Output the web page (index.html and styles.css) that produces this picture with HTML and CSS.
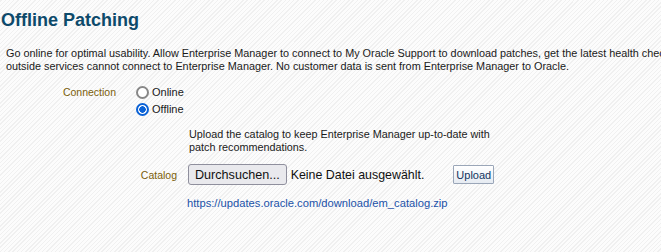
FILE: index.html
```html
<!DOCTYPE html>
<html lang="en">
<head>
    <meta charset="UTF-8">
    <title>Offline Patching</title>
    <link rel="stylesheet" href="styles.css">
</head>
<body>
    <div class="page">
        <h1 class="title">Offline Patching</h1>
        <p class="intro">Go online for optimal usability. Allow Enterprise Manager to connect to My Oracle Support to download patches, get the latest health checks, and more. In offline mode,<br>outside services cannot connect to Enterprise Manager. No customer data is sent from Enterprise Manager to Oracle.</p>

        <!-- Connection mode -->
        <div class="row connection">
            <div class="label conn-label">Connection</div>
            <div class="radios">
                <label class="radio"><span class="dot"></span>Online</label>
                <label class="radio checked"><span class="dot"></span>Offline</label>
            </div>
        </div>

        <p class="help">Upload the catalog to keep Enterprise Manager up-to-date with<br>patch recommendations.</p>

        <!-- Catalog upload -->
        <div class="row catalog">
            <div class="label cat-label">Catalog</div>
            <button class="browse" type="button">Durchsuchen...</button>
            <span class="nofile">Keine Datei ausgewählt.</span>
            <button class="upload" type="button">Upload</button>
        </div>

        <a class="link" href="#">https://updates.oracle.com/download/em_catalog.zip</a>
    </div>
</body>
</html>
```

FILE: styles.css
```css
* {
    margin: 0;
    padding: 0;
    box-sizing: border-box;
}

html, body {
    height: 100%;
}

body {
    font-family: 'Liberation Sans', Arial, sans-serif;
    font-size: 11px;
    color: #222;
    background: repeating-linear-gradient(-45deg, #fcfcfc 0, #fcfcfc 2px, #f0f0f0 2px, #f0f0f0 3px);
    overflow: hidden;
}

.page {
    padding: 9px 0 0 1px;
    width: 661px;
}

.title {
    font-size: 18px;
    font-weight: bold;
    color: #0d4a6b;
    line-height: 22px;
    margin-bottom: 16px;
}

.intro {
    margin-left: 5px;
    line-height: 13px;
    white-space: nowrap;
    width: 655px;
    overflow: hidden;
    height: 26px;
    font-size: 10.85px;
    color: #1a1a1a;
}

.row {
    display: flex;
    align-items: flex-start;
}

.label {
    color: #7b5e0a;
    text-align: right;
}

.connection {
    margin-top: 12px;
}

.conn-label {
    width: 115px;
    padding-top: 1px;
    font-size: 10.5px;
}

.radios {
    margin-left: 20px;
    display: flex;
    flex-direction: column;
    gap: 3px;
}

.radio {
    display: flex;
    align-items: center;
    gap: 3px;
    height: 14px;
    color: #1a1a1a;
}

.dot {
    width: 13px;
    height: 13px;
    border-radius: 50%;
    border: 2px solid #878787;
    background: #fff;
    display: inline-block;
}

.checked .dot {
    border-color: #0b62d6;
    background: radial-gradient(circle, #0b62d6 0 3px, #fff 3.5px);
}

.help {
    margin: 12px 0 0 188px;
    line-height: 13px;
    font-size: 10.8px;
    color: #1a1a1a;
}

.catalog {
    margin-top: 10px;
    align-items: center;
}

.cat-label {
    width: 176px;
    font-size: 10.5px;
}

.browse {
    margin-left: 11px;
    height: 21px;
    padding: 0 6px;
    font-family: 'Liberation Sans', Arial, sans-serif;
    font-size: 12.6px;
    color: #111;
    background: #e9e9ed;
    border: 1px solid #8f8f9d;
    border-radius: 3px;
}

.nofile {
    margin-left: 4px;
    font-size: 12.4px;
    color: #111;
}

.upload {
    margin-left: 29px;
    height: 19px;
    padding: 0 2px;
    font-family: 'Liberation Sans', Arial, sans-serif;
    font-size: 11px;
    color: #12345e;
    background: linear-gradient(#ffffff, #e6ebf2);
    border: 1px solid #9aa6b8;
    border-radius: 1px;
}

.link {
    display: block;
    margin: 12px 0 0 186px;
    color: #2152a8;
    text-decoration: none;
    font-size: 11.2px;
}
```
